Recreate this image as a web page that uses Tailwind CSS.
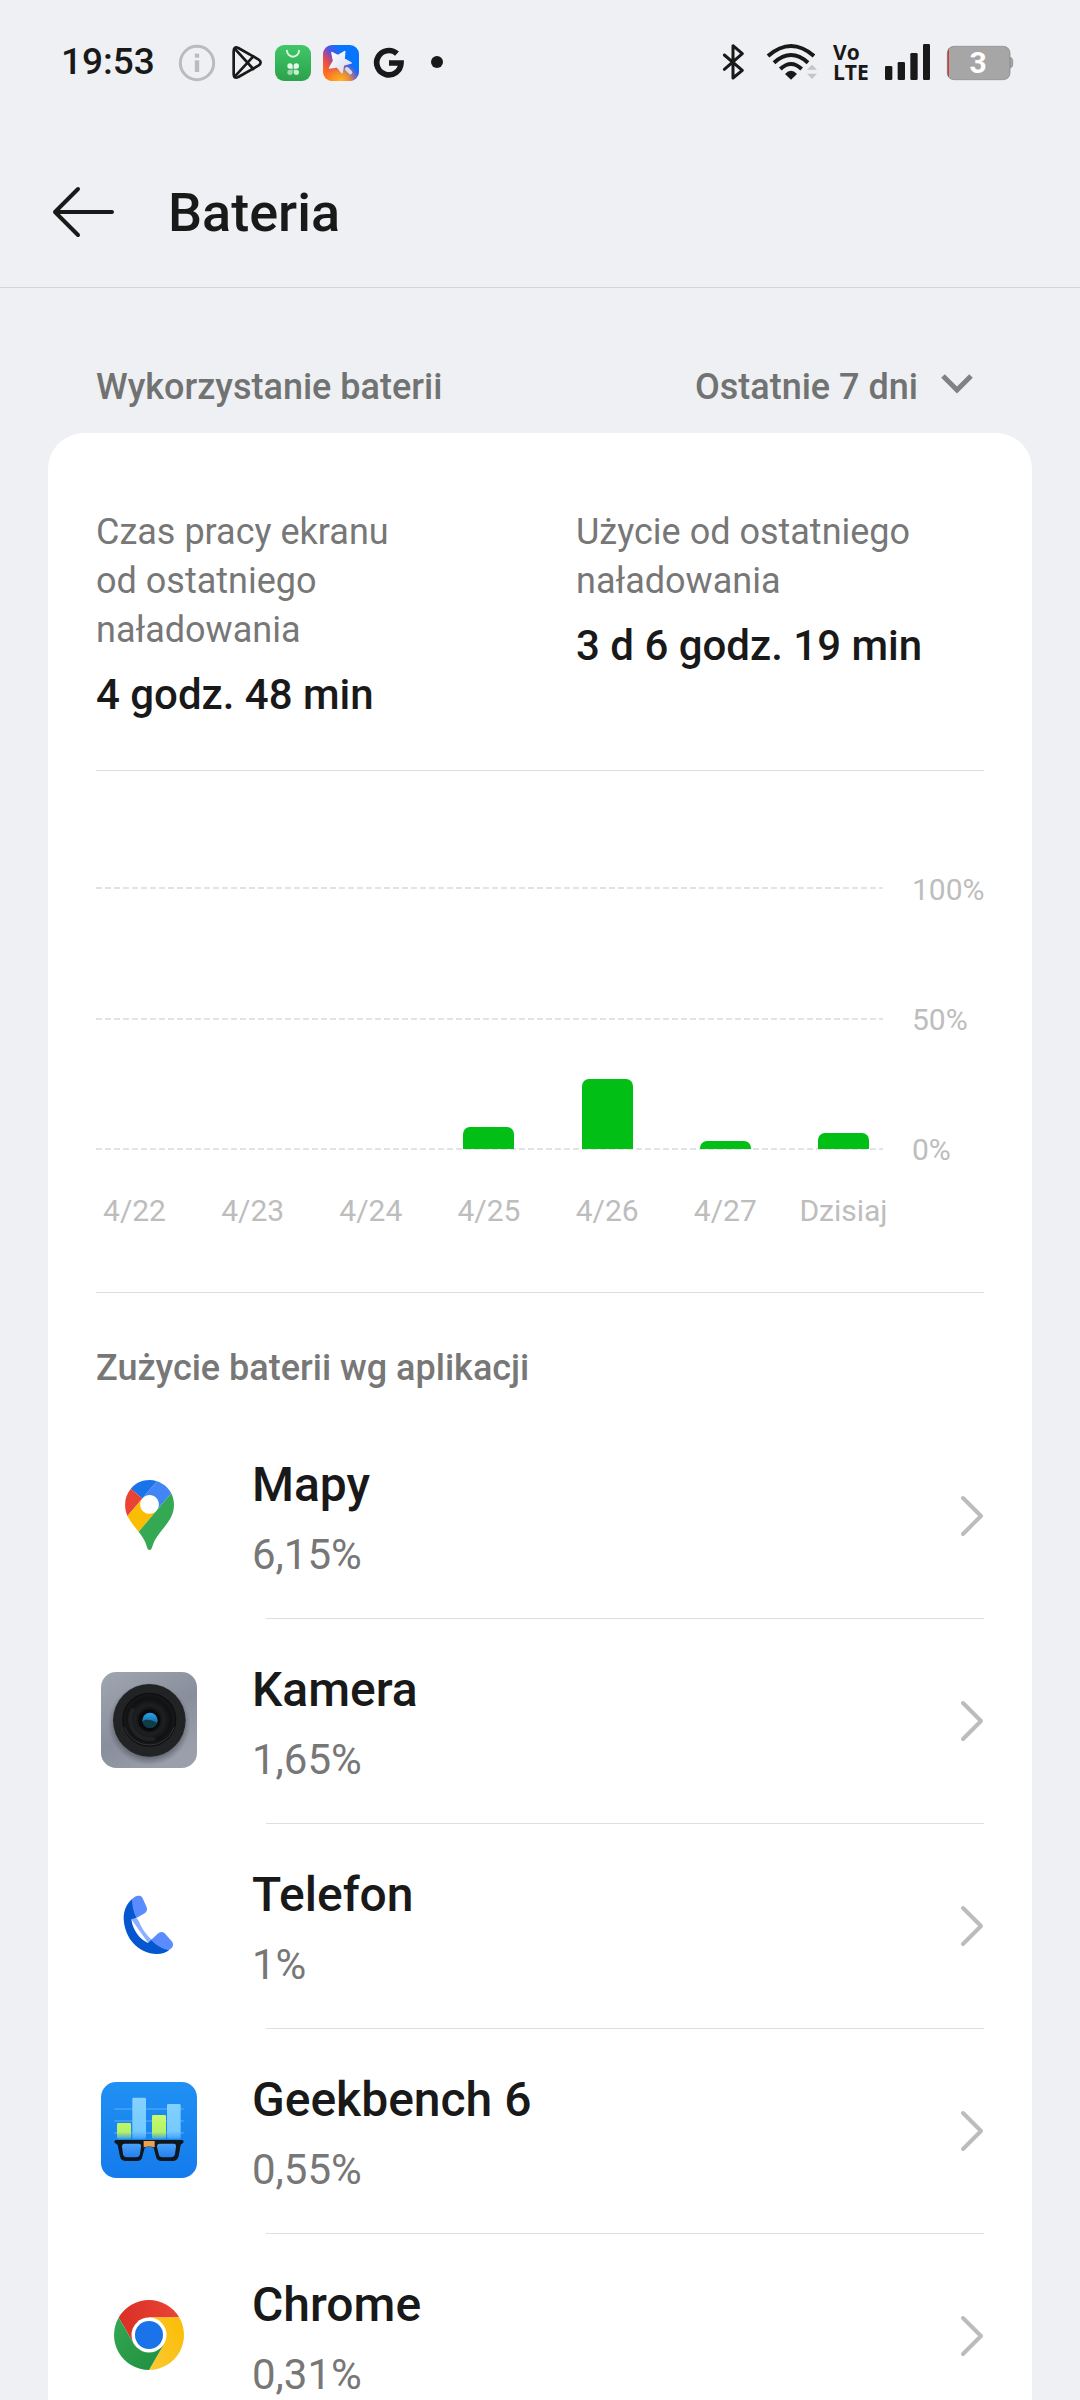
<!DOCTYPE html>
<html lang="pl">
<head>
<meta charset="utf-8">
<meta name="viewport" content="width=device-width, initial-scale=1">
<title>Bateria</title>
<script src="https://cdn.jsdelivr.net/npm/@tailwindcss/browser@4"></script>
</head>
<body class="flex h-screen flex-col overflow-hidden bg-[#eff0f3] font-['Roboto',sans-serif] text-[#191919]">

<!-- Status bar -->
<div class="flex h-[138px] shrink-0 items-center justify-between pr-[66px] pb-[14px] pl-[61px]">
  <div class="flex items-center">
    <span class="w-[117px] text-[37px] leading-10 font-medium">19:53</span>
    <svg class="h-10 w-[38px]" viewBox="414 66 114 120" fill="none" stroke="#b9bbbd"><circle cx="471" cy="129" r="50" stroke-width="9"/><path d="M471 121v35" stroke-width="13"/><path d="M471 101v12" stroke-width="13"/></svg>
    <svg class="ml-[14px] h-10 w-[35px]" viewBox="570 66 105 120" fill="none" stroke="#191919" stroke-width="8" stroke-linejoin="round" stroke-linecap="round"><path d="M581 94Q581 78 595 84L655 118Q669 127 655 137L595 171Q581 177 581 163Z"/><path d="M584 86L640 147M584 170L640 109"/></svg>
    <svg class="ml-[10px] h-10 w-9" viewBox="705 66 108 120"><defs><linearGradient id="market" x2="0" y2="1"><stop stop-color="#41c768"/><stop offset="1" stop-color="#2ba24b"/></linearGradient></defs><rect x="705" y="75" width="108" height="108" rx="27" fill="url(#market)"/><path d="M741 92a18 18 0 0 0 36 0" fill="none" stroke="#dcf8e3" stroke-width="6" stroke-linecap="round"/><g fill="#e3f8e9"><path d="M758 146h-8a8 8 0 1 1 8-8zM761 146v-8a8 8 0 1 1 8 8z"/><path d="M761 149h8a8 8 0 1 1-8 8z" opacity=".85"/><path d="M758 149v8a8 8 0 1 1-8-8z" opacity=".6"/></g></svg>
    <svg class="ml-3 h-10 w-9" viewBox="849 66 108 120"><defs><linearGradient id="theme" x1=".1" y1=".8" x2=".65" y2=".3"><stop stop-color="#ff6b1f"/><stop offset=".35" stop-color="#e04a52"/><stop offset=".65" stop-color="#5a50e0"/><stop offset="1" stop-color="#0574ff"/></linearGradient><radialGradient id="glow" cx=".5" cy="1" r=".5"><stop stop-color="#ffb81c"/><stop offset=".5" stop-color="#ffa51c" stop-opacity=".7"/><stop offset="1" stop-color="#ff9a20" stop-opacity="0"/></radialGradient><linearGradient id="star" x2="1" y2="1"><stop stop-color="#fff"/><stop offset="1" stop-color="#d4d9ee"/></linearGradient></defs><rect x="849" y="75" width="108" height="108" rx="27" fill="url(#theme)"/><rect x="849" y="75" width="108" height="108" rx="27" fill="url(#glow)"/><path d="M876 98L894 107L914 95L912 117L933 129L910 135L906 158L892 140L869 144L881 123Z" fill="url(#star)" stroke="url(#star)" stroke-width="5" stroke-linejoin="round"/><path d="M921 147L931 157" stroke="#d9dce4" stroke-width="12" stroke-linecap="round"/></svg>
    <svg class="ml-[13px] h-10 w-[34px]" viewBox="996 66 102 120" fill="none" stroke="#191919" stroke-width="17"><path d="M1071 101A36.500 36.500 0 1 0 1083 129H1047"/></svg>
    <svg class="ml-6 h-10 w-[14px]" viewBox="1170 66 42 120"><circle cx="1191" cy="126" r="18" fill="#191919"/></svg>
  </div>
  <div class="flex items-center">
    <svg class="h-10 w-[23px]" viewBox="96 66 69 120" fill="none" stroke="#191919" stroke-width="9" stroke-linejoin="round" stroke-linecap="round"><path d="M103 105L157 151L129 174V77L157 101L103 148"/></svg>
    <svg class="ml-[21px] h-10 w-[52px]" viewBox="228 66 156 120"><g fill="none" stroke="#191919" stroke-width="12"><path d="M234 108Q303 48 372 108"/><path d="M252 128Q303 82 354 128"/><path d="M271 147Q303 117 335 147"/></g><path d="M285 162Q303 142 321 162L303 179Z" fill="#191919"/><path d="M351 149L366 134L381 149ZM351 161H381L366 177Z" fill="#c4c5c7"/></svg>
    <div class="ml-[15px] w-[34px] font-['Open_Sans',sans-serif] text-[21px] leading-5 font-bold"><div>Vo</div><div>LTE</div></div>
    <svg class="ml-[17px] h-10 w-[47px]" viewBox="582 66 141 120" fill="#191919"><rect x="585" y="138" width="22" height="42" rx="4"/><rect x="623" y="126" width="22" height="54" rx="4"/><rect x="661" y="99" width="22" height="81" rx="4"/><rect x="699" y="72" width="21" height="108" rx="4"/></svg>
    <div class="relative ml-[15px] flex h-10 w-[68px] items-center justify-center pr-1">
      <svg class="absolute inset-0 h-10 w-[68px]" viewBox="768 66 204 120"><defs><clipPath id="cell"><rect x="772" y="79" width="188" height="100" rx="20"/></clipPath></defs><path d="M957 112h4q7 3 7 9v14q0 6-7 9h-4z" fill="#a6a6a6" stroke="#818181" stroke-width="2"/><g clip-path="url(#cell)"><rect x="772" y="79" width="188" height="100" fill="#a6a6a6"/><rect x="770" y="79" width="7" height="100" fill="#d43a33"/></g><rect x="772" y="79" width="188" height="100" rx="20" fill="none" stroke="#77787a" stroke-width="2"/></svg>
      <span class="relative pt-[2px] text-[30px] leading-10 font-bold text-white">3</span>
    </div>
  </div>
</div>

<!-- Title bar -->
<header class="flex h-[150px] shrink-0 items-center border-b border-[#d3d4d6] pl-[48px]">
  <button type="button" aria-label="Wstecz" class="flex h-[72px] w-[72px] items-center">
    <svg class="h-[72px] w-[72px]" viewBox="0 0 72 72" fill="none" stroke="#191919" stroke-width="4" stroke-linecap="round" stroke-linejoin="round"><path d="M30 12L7 35L30 58M7 35H64"/></svg>
  </button>
  <h1 class="ml-12 text-[54px] leading-[64px] font-medium">Bateria</h1>
</header>

<main class="min-h-0 flex-1 overflow-y-auto px-12 [scrollbar-width:none]">
  <div class="flex h-[145px] items-end justify-between px-12 pb-[22px] text-[36px] leading-[48px] font-medium text-[#717272]">
    <h2>Wykorzystanie baterii</h2>
    <div class="relative">
      <select aria-label="Okres" class="h-12 appearance-none bg-transparent pr-[66px] leading-[48px] field-sizing-content">
        <option>Ostatnie 7 dni</option>
      </select>
      <svg class="pointer-events-none absolute top-2 right-[9px] h-[30px] w-[36px]" viewBox="0 0 36 30" fill="none" stroke="#808182" stroke-width="5"><path d="M4 5L18 19L32 5"/></svg>
    </div>
  </div>

  <section class="rounded-t-[36px] bg-white px-12 pt-[75px]">
    <dl class="grid grid-cols-[480fr_408fr] border-b border-[#dedede] pb-[47px]">
      <div>
        <dt class="max-w-[330px] text-[36px] leading-[49px] text-[#777]">Czas pracy ekranu od ostatniego naładowania</dt>
        <dd class="mt-3 text-[42px] leading-[56px] font-medium">4 godz. 48 min</dd>
      </div>
      <div>
        <dt class="max-w-[380px] text-[36px] leading-[49px] text-[#777]">Użycie od ostatniego naładowania</dt>
        <dd class="mt-3 text-[42px] leading-[56px] font-medium">3 d 6 godz. 19 min</dd>
      </div>
    </dl>

    <!-- Daily usage chart -->
    <div class="border-b border-[#dedede] pt-[116px] pb-[61px] text-[30px] leading-10 text-[#bdbdbd]">
      <div class="flex h-[263px]">
        <div class="relative flex flex-1 flex-col justify-between">
          <div class="h-[2px] bg-[repeating-linear-gradient(to_right,#e3e3e3_0_6px,transparent_6px_9px)]"></div>
          <div class="h-[2px] bg-[repeating-linear-gradient(to_right,#e3e3e3_0_6px,transparent_6px_9px)]"></div>
          <div class="h-[2px] bg-[repeating-linear-gradient(to_right,#e3e3e3_0_6px,transparent_6px_9px)]"></div>
          <div class="absolute top-px right-[14px] bottom-px left-[13px] flex items-end justify-between">
            <div class="w-[51px]"></div>
            <div class="w-[51px]"></div>
            <div class="w-[51px]"></div>
            <div class="w-[51px] rounded-t-[7px] bg-[#01bf15]" style="height:8.6%"></div>
            <div class="w-[51px] rounded-t-[7px] bg-[#01bf15]" style="height:27%"></div>
            <div class="w-[51px] rounded-t-[7px] bg-[#01bf15]" style="height:3.1%"></div>
            <div class="w-[51px] rounded-t-[7px] bg-[#01bf15]" style="height:6.3%"></div>
          </div>
        </div>
        <div class="-mt-[17px] -mb-5 flex w-[101px] flex-col justify-between pl-[29px]">
          <span>100%</span><span>50%</span><span>0%</span>
        </div>
      </div>
      <div class="mt-[41px] mr-[101px] flex justify-between pr-[14px] pl-[13px]">
        <span class="flex w-[51px] justify-center">4/22</span>
        <span class="flex w-[51px] justify-center">4/23</span>
        <span class="flex w-[51px] justify-center">4/24</span>
        <span class="flex w-[51px] justify-center">4/25</span>
        <span class="flex w-[51px] justify-center">4/26</span>
        <span class="flex w-[51px] justify-center">4/27</span>
        <span class="flex w-[51px] justify-center">Dzisiaj</span>
      </div>
    </div>

    <h2 class="pt-[51px] pb-[22px] text-[36px] leading-[48px] font-medium text-[#777]">Zużycie baterii wg aplikacji</h2>

    <ul>
      <li>
        <a href="#mapy" class="flex h-[204px] items-center pb-[2px] pl-[5px]">
          <span class="flex size-24 items-center justify-center">
            <svg class="h-[70px] w-[49px]" viewBox="0 0 92.300 132.300"><path fill="#1a73e8" d="M60.200 2.200C55.800.8 51 0 46.100 0 32 0 19.300 6.400 10.800 16.500l21.800 18.300L60.200 2.200z"/><path fill="#ea4335" d="M10.800 16.500C4.100 24.500 0 34.900 0 46.100c0 8.700 1.700 15.700 4.600 22l28-33.300-21.800-18.300z"/><path fill="#4285f4" d="M46.200 28.500c9.800 0 17.700 7.900 17.700 17.700 0 4.300-1.600 8.300-4.200 11.400 0 0 13.900-16.600 27.500-32.700-5.600-10.800-15.300-19-27-22.700L32.600 34.800c3.300-3.800 8.100-6.300 13.600-6.300"/><path fill="#fbbc04" d="M46.200 63.800c-9.800 0-17.700-7.900-17.700-17.700 0-4.300 1.500-8.300 4.100-11.300l-28 33.300c4.800 10.600 12.800 19.200 21 29.900l34.100-40.500c-3.300 3.900-8.100 6.300-13.500 6.300"/><path fill="#34a853" d="M59.100 109.200c15.400-24.100 33.300-35 33.300-63 0-7.700-1.900-14.900-5.200-21.300L25.600 98c2.600 3.400 5.300 7.300 7.900 11.300 9.400 14.500 6.800 23.100 12.800 23.100s3.400-8.700 12.800-23.200"/></svg>
          </span>
          <span class="ml-[55px] flex flex-1 flex-col gap-[6px] pt-[10px]"><span class="text-[48px] leading-[64px] font-medium">Mapy</span><span class="text-[42px] leading-[64px] text-[#777]">6,15%</span></span>
          <svg class="h-11 w-6" viewBox="0 0 24 44" fill="none" stroke="#bcbcbc" stroke-width="4" stroke-linecap="round" stroke-linejoin="round"><path d="M3 5L21 23L3 41"/></svg>
        </a>
        <div class="ml-[170px] h-px bg-[#dedede]"></div>
      </li>
      <li>
        <a href="#kamera" class="flex h-[204px] items-center pb-[2px] pl-[5px]">
          <svg class="size-24" viewBox="63 66 288 288"><defs><linearGradient id="body" x2=".6" y2="1"><stop stop-color="#a0a6b1"/><stop offset=".6" stop-color="#888e9b"/><stop offset="1" stop-color="#9a9fab"/></linearGradient><radialGradient id="shade"><stop offset=".8" stop-color="#50555f" stop-opacity=".7"/><stop offset="1" stop-color="#60656f" stop-opacity="0"/></radialGradient><radialGradient id="lens"><stop offset=".3" stop-color="#0c0d0f"/><stop offset=".55" stop-color="#1e1f21"/><stop offset=".8" stop-color="#101112"/><stop offset="1" stop-color="#19191a"/></radialGradient><linearGradient id="glass" x2="0" y2="1"><stop stop-color="#2aa4ec"/><stop offset=".55" stop-color="#1774ae"/><stop offset="1" stop-color="#0c2d35"/></linearGradient></defs><rect x="63" y="66" width="288" height="288" rx="46" fill="url(#body)"/><circle cx="208" cy="222" r="124" fill="url(#shade)"/><circle cx="208" cy="211" r="109" fill="#222324"/><circle cx="208" cy="209" r="79" fill="url(#lens)" stroke="#0d0e0f" stroke-width="4"/><path d="M134 232A78 78 0 0 0 282 232" fill="none" stroke="#343536" stroke-width="3"/><path d="M160 175A60 60 0 0 0 225 266" fill="none" stroke="#2b2c2e" stroke-width="12" opacity=".6"/><circle cx="208" cy="211" r="33" fill="#090a0c"/><circle cx="210" cy="211" r="23" fill="url(#glass)"/><path d="M189 212Q206 204 231 219A22 22 0 0 1 189 218Z" fill="#0f3c47"/></svg>
          <span class="ml-[55px] flex flex-1 flex-col gap-[6px] pt-[10px]"><span class="text-[48px] leading-[64px] font-medium">Kamera</span><span class="text-[42px] leading-[64px] text-[#777]">1,65%</span></span>
          <svg class="h-11 w-6" viewBox="0 0 24 44" fill="none" stroke="#bcbcbc" stroke-width="4" stroke-linecap="round" stroke-linejoin="round"><path d="M3 5L21 23L3 41"/></svg>
        </a>
        <div class="ml-[170px] h-px bg-[#dedede]"></div>
      </li>
      <li>
        <a href="#telefon" class="flex h-[204px] items-center pb-[2px] pl-[5px]">
          <svg class="size-24" viewBox="63 681 288 288"><path fill="#8bb0ff" d="M153 806L166 800L176 812C184 832 196 852 216 870L205 880Z"/><path fill="#0457cf" d="M157 746C139 762 131 782 131 806C134 865 174 910 231 912C246 912 258 908 267 901L214 869L204 879C179 868 158 840 154 808L169 803Z"/><path fill="#5a8cff" d="M156 747C164 738 174 735 182 738Q186 740 188 745L200 772Q204 783 194 790L169 804Q156 776 156 747ZM213 870L233 851Q243 842 254 850L274 872Q284 883 275 894L266 901Q236 894 213 870Z"/></svg>
          <span class="ml-[55px] flex flex-1 flex-col gap-[6px] pt-[10px]"><span class="text-[48px] leading-[64px] font-medium">Telefon</span><span class="text-[42px] leading-[64px] text-[#777]">1%</span></span>
          <svg class="h-11 w-6" viewBox="0 0 24 44" fill="none" stroke="#bcbcbc" stroke-width="4" stroke-linecap="round" stroke-linejoin="round"><path d="M3 5L21 23L3 41"/></svg>
        </a>
        <div class="ml-[170px] h-px bg-[#dedede]"></div>
      </li>
      <li>
        <a href="#geekbench" class="flex h-[204px] items-center pb-[2px] pl-[5px]">
          <svg class="size-24" viewBox="63 66 288 288"><defs><linearGradient id="gb" x2="0" y2="1"><stop stop-color="#2090f3"/><stop offset="1" stop-color="#147bec"/></linearGradient><linearGradient id="bluebar" gradientUnits="userSpaceOnUse" x1="0" y1="112" x2="0" y2="238"><stop stop-color="#84d2ff"/><stop offset=".8" stop-color="#76caff"/><stop offset="1" stop-color="#3c9ff6"/></linearGradient><linearGradient id="limebar" gradientUnits="userSpaceOnUse" x1="0" y1="165" x2="0" y2="238"><stop stop-color="#c8fb6c"/><stop offset=".7" stop-color="#b4f268"/><stop offset="1" stop-color="#3e9fe0"/></linearGradient><linearGradient id="specs" x2="0" y2="1"><stop stop-color="#4ba2f8"/><stop offset="1" stop-color="#237fee"/></linearGradient></defs><rect x="63" y="66" width="288" height="288" rx="46" fill="url(#gb)"/><path d="M103 147H311M103 183H311M103 219H311" stroke="#46a4f6" stroke-width="5"/><g fill="url(#bluebar)"><rect x="157" y="113" width="41" height="123" rx="4"/><rect x="261" y="132" width="41" height="104" rx="4"/></g><g fill="url(#limebar)"><rect x="111" y="189" width="42" height="47" rx="4"/><rect x="216" y="165" width="42" height="71" rx="4"/></g><path d="M106 240H308Q313 243 310 248L302 254L296 289Q292 303 278 303H245Q231 303 228 290L221 263Q207 258 194 263L187 290Q184 303 171 303H138Q124 303 120 290L113 255L104 248Q101 243 106 240Z" fill="#10161c"/><path d="M191 243H224V262Q207 257 191 262Z" fill="#efa04e"/><path d="M134 251H176Q184 251 183 260L180 282Q178 292 168 292H140Q131 292 129 282L126 260Q126 251 134 251ZM239 251H281Q289 251 288 260L285 282Q283 292 273 292H247Q238 292 236 282L231 260Q231 251 239 251Z" fill="url(#specs)"/></svg>
          <span class="ml-[55px] flex flex-1 flex-col gap-[6px] pt-[10px]"><span class="text-[48px] leading-[64px] font-medium">Geekbench 6</span><span class="text-[42px] leading-[64px] text-[#777]">0,55%</span></span>
          <svg class="h-11 w-6" viewBox="0 0 24 44" fill="none" stroke="#bcbcbc" stroke-width="4" stroke-linecap="round" stroke-linejoin="round"><path d="M3 5L21 23L3 41"/></svg>
        </a>
        <div class="ml-[170px] h-px bg-[#dedede]"></div>
      </li>
      <li>
        <a href="#chrome" class="flex h-[204px] items-center pb-[2px] pl-[5px]">
          <svg class="size-24" viewBox="-144 -144 288 288"><defs><linearGradient id="cr" x2="1"><stop stop-color="#d93025"/><stop offset="1" stop-color="#ea4335"/></linearGradient><linearGradient id="cy" x1="0" y1="1" x2="1" y2="0"><stop stop-color="#fcc934"/><stop offset="1" stop-color="#fbbc04"/></linearGradient><linearGradient id="cg" x1="1" y1="1" x2="0" y2="0"><stop stop-color="#1e8e3e"/><stop offset="1" stop-color="#34a853"/></linearGradient></defs><path d="M-90.900-52.500A105 105 0 0 1 90.900-52.500H0L-45.500 26.200Z" fill="url(#cr)"/><path d="M90.900-52.500A105 105 0 0 1 0 105L45.500 26.200L0-52.500Z" fill="url(#cy)"/><path d="M0 105A105 105 0 0 1-90.900-52.500L-45.500 26.200H45.500Z" fill="url(#cg)"/><circle r="52.500" fill="#fff"/><circle r="42" fill="#1a73e8"/></svg>
          <span class="ml-[55px] flex flex-1 flex-col gap-[6px] pt-[10px]"><span class="text-[48px] leading-[64px] font-medium">Chrome</span><span class="text-[42px] leading-[64px] text-[#777]">0,31%</span></span>
          <svg class="h-11 w-6" viewBox="0 0 24 44" fill="none" stroke="#bcbcbc" stroke-width="4" stroke-linecap="round" stroke-linejoin="round"><path d="M3 5L21 23L3 41"/></svg>
        </a>
        <div class="ml-[170px] h-px bg-[#dedede]"></div>
      </li>
    </ul>
  </section>
</main>
</body>
</html>
